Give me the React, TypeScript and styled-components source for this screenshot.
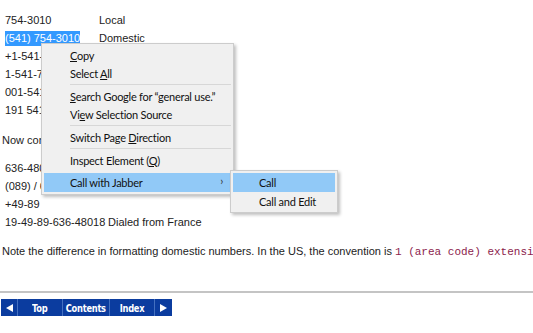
import React from 'react';
import styled, { createGlobalStyle } from 'styled-components';

const GlobalStyle = createGlobalStyle`
  html, body {
    margin: 0;
    padding: 0;
    overflow: hidden;
    background: #ffffff;
  }
  body {
    font-family: "Liberation Sans", Arial, sans-serif;
    font-size: 11px;
    color: #222222;
  }
`;

const localNumbers = [
  ['754-3010', 'Local'],
  ['(541) 754-3010', 'Domestic'],
  ['+1-541-754-3010', 'International'],
  ['1-541-754-3010', 'Dialed in the US'],
  ['001-541-754-3010', 'Dialed from Germany'],
  ['191 541 754 3010', 'Dialed from France'],
];

// the third row is only half painted in the capture
const germanNumbers = [
  ['636-48018', 'Local'],
  ['(089) / 636-48018', 'Domestic'],
  ['+49-89', ''],
  ['19-49-89-636-48018', 'Dialed from France'],
];

const Page = styled.div`
  position: relative;
  width: 533px;
  height: 333px;
  padding: 11px 0 0 2px;
  box-sizing: border-box;
  white-space: nowrap;
  overflow: hidden;
`;

const PhoneTable = styled.div<{ $first: number; $top?: number }>`
  display: grid;
  grid-template-columns: ${p => p.$first}px auto;
  grid-auto-rows: 18px;
  align-items: center;
  padding-left: 3px;
  margin-top: ${p => p.$top ?? 0}px;
`;

const Cell = styled.span<{ $selected?: boolean }>`
  justify-self: start;
  line-height: 15px;
  ${p => p.$selected && 'background: #3399ff; color: #ffffff;'}
`;

const Para = styled.p<{ $top: number }>`
  margin: ${p => p.$top}px 0 0 0;
  line-height: 18px;
`;

const Code = styled.code`
  font-family: "Liberation Mono", "Courier New", monospace;
  font-size: 11px;
  color: #8c1c4c;
  white-space: pre;
`;

const Rule = styled.hr`
  margin: 30px 0 0 -2px;
  border: 0;
  height: 2px;
  background: #c4c4c4;
`;

const NavBar = styled.div`
  display: inline-flex;
  margin-top: 6px;
  margin-left: -1px;
  height: 17px;
  background: #0b3c9f;
`;

const NavCell = styled.a<{ $w: number }>`
  display: flex;
  align-items: center;
  justify-content: center;
  width: ${p => p.$w}px;
  box-sizing: border-box;
  border-left: 1px solid #4470c0;
  color: #ffffff;
  font-family: "DejaVu Sans Condensed", "Liberation Sans", sans-serif;
  font-weight: bold;
  font-size: 10.5px;
  letter-spacing: -0.3px;
  text-decoration: none;
  &:first-child {
    border-left: 0;
  }
`;

const NavLabel = styled.span`
  display: inline-block;
  transform: scaleX(0.88);
`;

const NavArrow = styled.span<{ $dir: 'left' | 'right' }>`
  width: 0;
  height: 0;
  border-top: 4px solid transparent;
  border-bottom: 4px solid transparent;
  ${p =>
    p.$dir === 'left'
      ? 'border-right: 7px solid #ffffff;'
      : 'border-left: 7px solid #ffffff;'}
`;

const Menu = styled.div<{ $left: number; $top: number; $width: number }>`
  position: absolute;
  left: ${p => p.$left}px;
  top: ${p => p.$top}px;
  width: ${p => p.$width}px;
  box-sizing: border-box;
  padding: 2px;
  background: #f0f0f0;
  border: 1px solid #cccccc;
  box-shadow: 2px 2px 3px rgba(0, 0, 0, 0.25);
  font-family: Lato, "Noto Sans", sans-serif;
  font-size: 11px;
  letter-spacing: -0.25px;
  color: #111111;
`;

const MenuItem = styled.div<{ $active?: boolean; $pad: number }>`
  position: relative;
  display: flex;
  align-items: center;
  height: ${p => (p.$active ? 19 : 18)}px;
  padding-left: ${p => p.$pad}px;
  background: ${p => (p.$active ? '#91c9f7' : 'transparent')};
`;

const Label = styled.span`
  white-space: pre;
`;

const Arrow = styled.span`
  position: absolute;
  right: 8px;
  top: 1px;
  font-size: 11px;
  color: #333333;
`;

const Separator = styled.div<{ $line?: boolean }>`
  height: 1px;
  margin: ${p => (p.$line ? '2px 0 2px 26px' : '1px 0 2px 26px')};
  background: ${p => (p.$line ? '#d7d7d7' : 'transparent')};
`;

const U = styled.span`
  text-decoration: underline;
`;

export default function App() {
  return (
    <>
      <GlobalStyle />
      <Page>
        <PhoneTable $first={94}>
          {localNumbers.map(([num, label], i) => (
            <React.Fragment key={num}>
              <Cell $selected={i === 1}>{num}</Cell>
              <Cell>{label}</Cell>
            </React.Fragment>
          ))}
        </PhoneTable>
        <Para $top={12}>Now consider a number in Munich, Germany:</Para>
        <PhoneTable $first={103} $top={10}>
          {germanNumbers.map(([num, label]) => (
            <React.Fragment key={num}>
              <Cell>{num}</Cell>
              <Cell>{label}</Cell>
            </React.Fragment>
          ))}
        </PhoneTable>
        <Para $top={11}>
          Note the difference in formatting domestic numbers. In the US, the convention is{' '}
          <Code>1 (area code) extension</Code>
        </Para>
        <Rule />
        <NavBar>
          <NavCell $w={16} href="#"><NavArrow $dir="left" /></NavCell>
          <NavCell $w={45} href="#"><NavLabel>Top</NavLabel></NavCell>
          <NavCell $w={47} href="#"><NavLabel>Contents</NavLabel></NavCell>
          <NavCell $w={45} href="#"><NavLabel>Index</NavLabel></NavCell>
          <NavCell $w={18} href="#"><NavArrow $dir="right" /></NavCell>
        </NavBar>

        <Menu $left={41} $top={43} $width={193}>
          <MenuItem $pad={26}><Label><U>C</U>opy</Label></MenuItem>
          <MenuItem $pad={26}><Label>Select <U>A</U>ll</Label></MenuItem>
          <Separator $line />
          <MenuItem $pad={26}><Label><U>S</U>earch Google for “general use.”</Label></MenuItem>
          <MenuItem $pad={26}><Label>Vi<U>e</U>w Selection Source</Label></MenuItem>
          <Separator $line />
          <MenuItem $pad={26}><Label>Switch Page <U>D</U>irection</Label></MenuItem>
          <Separator $line />
          <MenuItem $pad={26}><Label>Inspect Element (<U>Q</U>)</Label></MenuItem>
          <Separator />
          <MenuItem $pad={26} $active>
            <Label>Call with Jabber</Label>
            <Arrow>›</Arrow>
          </MenuItem>
        </Menu>

        <Menu $left={230} $top={170} $width={108}>
          <MenuItem $pad={26} $active><Label>Call</Label></MenuItem>
          <MenuItem $pad={26}><Label>Call and Edit</Label></MenuItem>
        </Menu>
      </Page>
    </>
  );
}
